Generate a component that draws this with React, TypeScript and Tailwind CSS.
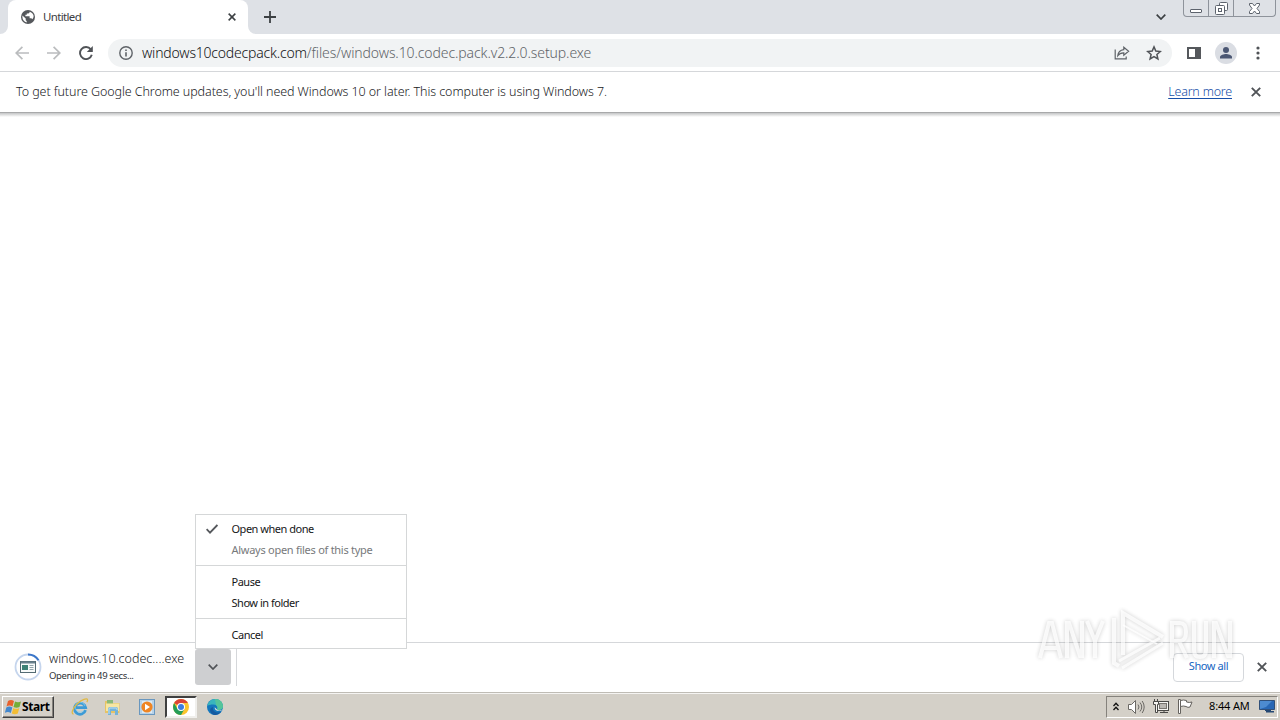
import type { ReactNode } from "react";

type IconProps = { className?: string };

const CloseIcon = ({ className = "" }: IconProps) => (
  <svg viewBox="0 0 10 10" className={className} fill="none" stroke="currentColor" strokeWidth="1.9">
    <path d="M.8.8l8.4 8.4M9.2.8L.8 9.2" />
  </svg>
);

const ChevronIcon = ({ className = "" }: IconProps) => (
  <svg viewBox="0 0 10 6" className={className} fill="none" stroke="currentColor" strokeWidth="1.7">
    <path d="M.7.7L5 5 9.3.7" />
  </svg>
);

const GlobeIcon = () => (
  <svg viewBox="0 0 14 14" className="h-3.5 w-3.5">
    <circle cx="7" cy="7" r="7" fill="#55585c" />
    <path d="M1.4 5.4l3.3 3.2v1.2c0 .6.5 1 1 1.1v1.6C3.2 12 1.4 9.8 1.4 7z" fill="#fff" />
    <path d="M8.6 1.7c0 1-.5 1.6-1.4 1.7H5.8v1.4H4.4v1.4h4.2v2.1h1.3c.7 0 1.2.4 1.4 1 .8-.9 1.3-2 1.3-3.2 0-2-1.6-3.8-4-4.4z" fill="#fff" />
  </svg>
);

const ArrowIcon = ({ className = "" }: IconProps) => (
  <svg viewBox="0 0 14 14" className={className} fill="none" stroke="currentColor" strokeWidth="1.7">
    <path d="M14 7H1.4M7.4.8L1.2 7l6.2 6.2" />
  </svg>
);

const ReloadIcon = () => (
  <svg viewBox="0 0 14 14" className="h-3.5 w-3.5" fill="none">
    <path d="M11.8 3.4A6 6 0 1 0 12.8 8.8" stroke="#505357" strokeWidth="1.9" />
    <path d="M13.8 0v6H7.8z" fill="#505357" />
  </svg>
);

const InfoIcon = () => (
  <svg viewBox="0 0 14 14" className="h-3.5 w-3.5" fill="none" stroke="#5f6368" strokeWidth="1.4">
    <circle cx="7" cy="7" r="6.2" />
    <path d="M7 6.2v4.2M7 3.4v1.5" strokeWidth="1.6" />
  </svg>
);

const ShareIcon = () => (
  <svg viewBox="0 0 16 14" className="h-3.5 w-4" fill="none" stroke="#5f6368" strokeWidth="1.2">
    <path d="M1.2 3.6v9.2h11v-2.4" />
    <path d="M9.8 1.2l4.8 4-4.8 4V6.8C7 6.7 5.2 7.6 3.8 9.6c.3-3.2 2.3-5.6 6-6z" />
  </svg>
);

const StarIcon = () => (
  <svg viewBox="0 0 16 16" className="h-4 w-4" fill="none" stroke="#505357" strokeWidth="1.5">
    <path d="M8 1.9l1.8 4.2 4.5.4-3.4 3 1 4.5L8 11.6 4.1 14l1-4.5-3.4-3 4.5-.4z" />
  </svg>
);

const Watermark = () => (
  <svg
    viewBox="0 0 200 68"
    className="pointer-events-none absolute top-[607px] left-[1036px] h-[68px] w-[200px] opacity-75 drop-shadow-[0_0_2px_rgba(0,0,0,0.32)]"
  >
    <g fill="none" stroke="#fff" strokeOpacity=".8" strokeWidth="4">
      <path d="M4 51L13 16h3l9 35M8 41h13" />
      <path d="M31 51V16h2l11 33h2V14" />
      <path d="M51 14l8 20v17M59 34l8-20" />
      <path d="M78 11v45l5 3" />
      <path d="M87 48V6l40 24" />
      <path d="M87 18l34 19" strokeWidth="2" />
      <path d="M83 54l41-23M86 61l41-25" strokeWidth="3" />
      <path d="M136 51V16h8q6 0 6 9t-6 9h-8M143 34l8 17" />
      <path d="M158 14v29q0 7 6 7t6-7V14" />
      <path d="M178 51V16h2l12 33h2V14" />
    </g>
  </svg>
);

const WindowControls = () => (
  <div className="flex h-[17px] w-[93px] overflow-hidden rounded-b border border-t-0 border-[#8e939b] text-[#5d636d]">
    <div className="flex w-[25px] items-end justify-center border-r border-[#8e939b] pb-[3px]">
      <span className="h-1 w-3 rounded-[1px] border border-current bg-white" />
    </div>
    <div className="flex w-[25px] items-center justify-center border-r border-[#8e939b]">
      <svg viewBox="0 0 13 13" className="h-[13px] w-[13px]" fill="#fff" stroke="currentColor">
        <rect x="4.5" y=".5" width="8" height="8" rx="1" />
        <rect x=".5" y="3.5" width="9" height="9" rx="1" />
        <rect x="3.5" y="6.5" width="3" height="3" />
      </svg>
    </div>
    <div className="flex flex-1 items-center justify-center">
      <svg viewBox="0 0 13 11" className="h-[11px] w-[13px]" fill="#fff" stroke="currentColor">
        <path d="M1.5.5h3l2 2.5 2-2.500h3v1.500L9 5.500l2.500 3v2h-3l-2-2.500-2 2.500h-3v-2l2.500-3L1.500 2z" />
      </svg>
    </div>
  </div>
);

const TabStrip = () => (
  <div className="flex h-[34px] items-start bg-[#dee1e6]">
    <div className="relative ml-2 flex h-[34px] w-60 items-center rounded-t-lg bg-white pl-[13px]">
      <svg viewBox="0 0 8 8" className="absolute bottom-0 -left-2 h-2 w-2" fill="#fff">
        <path d="M8 0v8H0a8 8 0 0 0 8-8z" />
      </svg>
      <svg viewBox="0 0 8 8" className="absolute -right-2 bottom-0 h-2 w-2" fill="#fff">
        <path d="M0 0v8h8a8 8 0 0 1-8-8z" />
      </svg>
      <GlobeIcon />
      <span className="ml-2 text-[11.5px] tracking-[-0.65px] text-[#3c4043]">Untitled</span>
      <CloseIcon className="mr-[12px] ml-auto h-2 w-2 text-[#3c4043]" />
    </div>
    <svg viewBox="0 0 12 12" className="mt-[11px] ml-4 h-3 w-3" stroke="#3c4043" strokeWidth="1.8">
      <path d="M6 0v12M0 6h12" />
    </svg>
    <ChevronIcon className="mt-[14px] ml-auto h-1.5 w-2.5 text-[#3c4043]" />
    <div className="mr-1 ml-[17px]">
      <WindowControls />
    </div>
  </div>
);

const Toolbar = () => (
  <div className="flex h-[38px] items-center border-b border-[#d5d7da] bg-white">
    <ArrowIcon className="ml-[15px] h-3.5 w-3.5 text-[#babcbe]" />
    <ArrowIcon className="mr-[18px] ml-[18px] h-3.5 w-3.5 rotate-180 text-[#babcbe]" />
    <ReloadIcon />
    <div className="ml-[15px] flex h-7 w-[1064px] items-center rounded-full bg-[#f1f3f4] pl-[11px]">
      <InfoIcon />
      <div className="ml-[9px] flex text-[14px] font-light whitespace-nowrap text-[#5f6368]">
        <span className="tracking-[-0.2px] text-[#101113]">windows10codecpack.com</span>
        <span className="tracking-[-0.1px]">/files/windows.10.codec.pack.v2.2.0.setup.exe</span>
      </div>
      <div className="mr-[10px] ml-auto flex items-center gap-4">
        <ShareIcon />
        <StarIcon />
      </div>
    </div>
    <div className="ml-[15px] flex h-3 w-3.5 justify-end border-2 border-[#55585c]">
      <span className="w-1 bg-[#55585c]" />
    </div>
    <svg viewBox="0 0 22 22" className="ml-[14px] h-[22px] w-[22px]">
      <circle cx="11" cy="11" r="11" fill="#dadde3" />
      <circle cx="11" cy="8" r="3" fill="#4b5773" />
      <path d="M5 16.5v-1.5c0-2 4-3 6-3s6 1 6 3v1.5z" fill="#4b5773" />
    </svg>
    <svg viewBox="0 0 4 14" className="ml-[19px] h-3.5 w-1" fill="#505357">
      <circle cx="2" cy="2" r="1.6" />
      <circle cx="2" cy="7" r="1.6" />
      <circle cx="2" cy="12" r="1.6" />
    </svg>
  </div>
);

const InfoBar = () => (
  <div className="flex h-10 items-center bg-white px-4 text-[12.5px] font-light text-[#202124]">
    <span className="tracking-[-0.08px] whitespace-nowrap">
      To get future Google Chrome updates, you'll need Windows 10 or later. This computer is using Windows 7.
    </span>
    <a className="ml-auto tracking-[-0.2px] whitespace-nowrap text-[#174fa8] underline underline-offset-2">Learn more</a>
    <CloseIcon className="mr-[3px] ml-[19px] h-2.5 w-2.5 text-[#505357]" />
  </div>
);

const MenuItem = ({ children, checked, disabled }: { children: ReactNode; checked?: boolean; disabled?: boolean }) => (
  <div
    className={`flex h-[21px] items-center text-[11px] ${
      disabled ? "tracking-[-0.27px] text-[#77797b]" : "tracking-[-0.48px] text-[#151618]"
    }`}
  >
    <span className="flex w-[35.5px] pb-0.5 pl-2.5">
      {checked && (
        <svg viewBox="0 0 12 10" className="h-2.5 w-3" fill="none" stroke="#55585c" strokeWidth="1.8">
          <path d="M.6 5.2l3.4 3.4L11.4 1" />
        </svg>
      )}
    </span>
    <span className="whitespace-nowrap">{children}</span>
  </div>
);

const DownloadMenu = () => (
  <div className="absolute top-[514px] left-[195px] h-[135px] w-[212px] border border-[#d5d7d8] bg-white pt-1">
    <MenuItem checked>Open when done</MenuItem>
    <MenuItem disabled>Always open files of this type</MenuItem>
    <div className="mt-1 mb-1.5 border-t border-[#d5d7d8]" />
    <MenuItem>Pause</MenuItem>
    <MenuItem>Show in folder</MenuItem>
    <div className="mt-1 mb-1.5 border-t border-[#d5d7d8]" />
    <MenuItem>Cancel</MenuItem>
  </div>
);

const DownloadShelf = () => (
  <div className="flex h-[50px] items-center border-t border-[#d5d7da] bg-white pb-px">
    <svg viewBox="0 0 28 28" className="ml-[14px] h-7 w-7" fill="none">
      <circle cx="14" cy="14" r="12.5" stroke="#c5d5ed" strokeWidth="1.8" />
      <path d="M14 1.5a12.5 12.5 0 0 1 10.5 5.8" stroke="#3b76c9" strokeWidth="2" />
      <rect x="6.5" y="8.5" width="15" height="11" fill="#f7faf9" stroke="#536b73" />
      <path d="M7 9.5h14" stroke="#68818c" strokeWidth="2" />
      <rect x="8" y="12" width="6" height="5" fill="#3d8175" />
      <path d="M15.5 12.5h4M15.5 14.5h4M15.5 16.5h4" stroke="#92a4aa" />
    </svg>
    <div className="ml-[7px] w-[146px] whitespace-nowrap">
      <div className="text-[12.5px] leading-4 font-light text-[#202124]">windows.10.codec....exe</div>
      <div className="mt-px text-[9.5px] leading-4 tracking-[-0.35px] text-[#303336]">Opening in 49 secs...</div>
    </div>
    <div className="flex h-9 w-9 items-center justify-center rounded-[3px] bg-[#cecfd1]">
      <ChevronIcon className="h-1.5 w-2.5 text-[#505357]" />
    </div>
    <div className="ml-[5px] h-[38px] w-px bg-[#d5d7da]" />
    <div className="ml-auto flex h-[29px] w-[71px] items-center justify-center rounded border border-[#d5d8dc] pb-px text-[11px] tracking-[-0.4px] whitespace-nowrap text-[#1766c2]">
      Show all
    </div>
    <CloseIcon className="mr-[13px] ml-[13px] h-2.5 w-2.5 text-[#505357]" />
  </div>
);

const WindowsLogo = () => (
  <svg viewBox="0 0 17 16" className="h-4 w-[17px]">
    <path d="M3 2q3-2 6 0L7.5 7.5q-3-1.8-6 0z" fill="#e8612c" />
    <path d="M10 2.5q3 1.5 6 0L14.5 8q-3 1.5-6 0z" fill="#74ad38" />
    <path d="M1.3 8.5q3-1.8 6 0L5.8 14q-3-2-6 0z" fill="#4388ce" />
    <path d="M8.3 9q3 1.7 6 0l-1.5 5.5q-3 1.5-6 0z" fill="#f2bd35" />
  </svg>
);

const ExplorerEIcon = () => (
  <svg viewBox="0 0 18 18" className="h-[18px] w-[18px]" fill="none">
    <path d="M14.5 12.2A5.6 5.6 0 1 1 14.6 9.6H5" stroke="#3d9bd6" strokeWidth="2.8" />
    <path d="M13.3 12A5 5 0 1 1 14 8" stroke="#83cbed" strokeWidth=".8" />
    <path d="M2.5 16C0 16 1 11 6 6s10-6 10.5-4.5c.3.8 0 1.7-.7 2.7" stroke="#e0b944" strokeWidth="1.3" />
  </svg>
);

const FolderIcon = () => (
  <svg viewBox="0 0 17 16" className="h-4 w-[17px]">
    <path d="M1 2h5l1 2h8.500v10H1z" fill="#e6c364" />
    <path d="M3 1h6v4H3z" fill="#8bb978" />
    <path d="M2 4.500h13V12H2z" fill="#f7e6a2" />
    <path d="M4 16V10q0-2 2-2h6q2 0 2 2v6h-3v-4H7v4z" fill="#74b3d9" />
    <path d="M5 15v-5q0-1 1-1h6q1 0 1 1v1" fill="none" stroke="#bfe1f2" />
  </svg>
);

const MediaIcon = () => (
  <svg viewBox="0 0 16 16" className="h-4 w-4">
    <rect x=".5" y=".5" width="15" height="15" fill="#b7d2e8" stroke="#6997bf" />
    <path d="M3 2h10v12H3z" fill="#dceaf4" />
    <circle cx="8" cy="8" r="5.6" fill="#ef8524" />
    <path d="M6 4.8l5 3.2-5 3.2z" fill="#fff" />
  </svg>
);

const ChromeIcon = () => (
  <svg viewBox="0 0 16 16" className="h-4 w-4">
    <circle cx="8" cy="8" r="8" fill="#fbc42d" />
    <path d="M8 8L1.1 4A8 8 0 0 1 14.9 4H8z" fill="#db4437" />
    <path d="M1.1 4A8 8 0 0 0 8 16l3.5-6L8 8 4.5 10z" fill="#249d58" />
    <circle cx="8" cy="8" r="4" fill="#fff" />
    <circle cx="8" cy="8" r="3" fill="#3d7de0" />
  </svg>
);

const EdgeIcon = () => (
  <svg viewBox="0 0 16 16" className="h-4 w-4">
    <circle cx="8" cy="8" r="8" fill="#1477bd" />
    <path d="M.3 7A8 8 0 0 1 8 0c4.500 0 8 3.500 8 7.500 0 3-4 4.500-6 3 1.200-1.500.3-5-3.500-5C3.500 5.500 1.500 6 .3 7z" fill="#39b5bd" />
    <path d="M8 0c5 0 8 3.500 8 7.500 0 3-4 4.500-6 3 1-1.300.6-3.500-1-4.500z" fill="#55c49a" />
    <path d="M6 8c-1 4 3 6.500 8 5a8 8 0 0 1-7 3C2 14 2 9 6 8z" fill="#155aa0" />
    <path d="M7.700 8.300c-.5 3.200 4 5 8 2.500l.3-.8c-2 1.800-5 1.800-6 .5z" fill="#e4e1da" />
  </svg>
);

const Tray = () => (
  <div className="mr-0.5 ml-auto flex h-[22px] w-[172px] items-center border border-t-[#85827c] border-r-white border-b-white border-l-[#85827c]">
    <svg viewBox="0 0 6 9" className="ml-1.5 h-[9px] w-1.5" fill="none" stroke="#111" strokeWidth="1.3">
      <path d="M.5 4L3 1.2 5.500 4M.5 8L3 5.200 5.500 8" />
    </svg>
    <svg viewBox="0 0 17 14" className="ml-[9px] h-3.5 w-[17px]" fill="#fff" stroke="#6b6965">
      <path d="M.5 4.5h3l4-4v13l-4-4h-3z" />
      <path d="M10 4.5q2 2.5 0 5M12 2.5q3.5 4.5 0 9M14.2 1q4 6 0 12" fill="none" />
    </svg>
    <svg viewBox="0 0 16 15" className="ml-2 h-[15px] w-4" fill="#f5f4f1" stroke="#4a4947">
      <rect x="4.5" y="2.5" width="11" height="9" />
      <rect x="6.5" y="4.5" width="7" height="5" fill="#bab7b2" stroke="#77746f" />
      <path d="M7 13.5h8M11 12v2" />
      <path d="M1.500 0v3M4.500 0v3M.5 2.500h5v3h-1v8h-2v-8h-2z" />
    </svg>
    <svg viewBox="0 0 16 15" className="ml-2 h-[15px] w-4" fill="#fff" stroke="#65625e">
      <path d="M1.5.5h2v14h-2z" />
      <path d="M3.5 1.500q3-1 6 0v1.500q3 1 5.500 0l-2 5q-2 1-4-.5-2.500-1-5.500 0z" />
    </svg>
    <span className="ml-4 w-[41px] text-[11px] tracking-[-0.15px] whitespace-nowrap text-black">8:44 AM</span>
    <svg viewBox="0 0 16 13" className="ml-[9px] h-[13px] w-4">
      <path d="M.5.5h15v9H.5z" fill="#2867b5" stroke="#315079" />
      <path d="M1 1h12L7 7 1 9z" fill="#4d8bd0" />
      <path d="M6 10h6v1h3v1.5H7V11H6z" fill="#244773" />
    </svg>
  </div>
);

const Taskbar = () => (
  <div className="flex h-7 items-center border-t border-[#bfbcb5] bg-[#d4d0c8] shadow-[inset_0_1px_0_#f5f4f2]">
    <button className="ml-0.5 flex h-[22px] w-[52px] items-center border border-t-white border-r-[#404040] border-b-[#404040] border-l-white pl-0.5 shadow-[inset_-1px_-1px_0_#85827c]">
      <WindowsLogo />
      <span className="text-[12px] font-bold tracking-[-0.4px] text-black">Start</span>
    </button>
    <div className="ml-[17px] flex items-center">
      <ExplorerEIcon />
      <div className="ml-[15px]">
        <FolderIcon />
      </div>
      <div className="ml-[18px]">
        <MediaIcon />
      </div>
      <div className="ml-2.5 flex h-[22px] w-8 items-center justify-center border-2 border-t-[#404040] border-r-[#f0efec] border-b-[#f0efec] border-l-[#404040] bg-white">
        <ChromeIcon />
      </div>
      <div className="ml-2.5">
        <EdgeIcon />
      </div>
    </div>
    <Tray />
  </div>
);

export default function App() {
  return (
    <div className="relative flex h-[720px] w-[1280px] flex-col overflow-hidden bg-white font-['Noto_Sans',sans-serif]">
      <TabStrip />
      <Toolbar />
      <InfoBar />
      <main className="flex-1 border-t border-[#a8a9aa] bg-linear-to-b from-[#c4c5c6] to-white to-[4px]" />
      <DownloadShelf />
      <Taskbar />
      <DownloadMenu />
      <Watermark />
    </div>
  );
}
